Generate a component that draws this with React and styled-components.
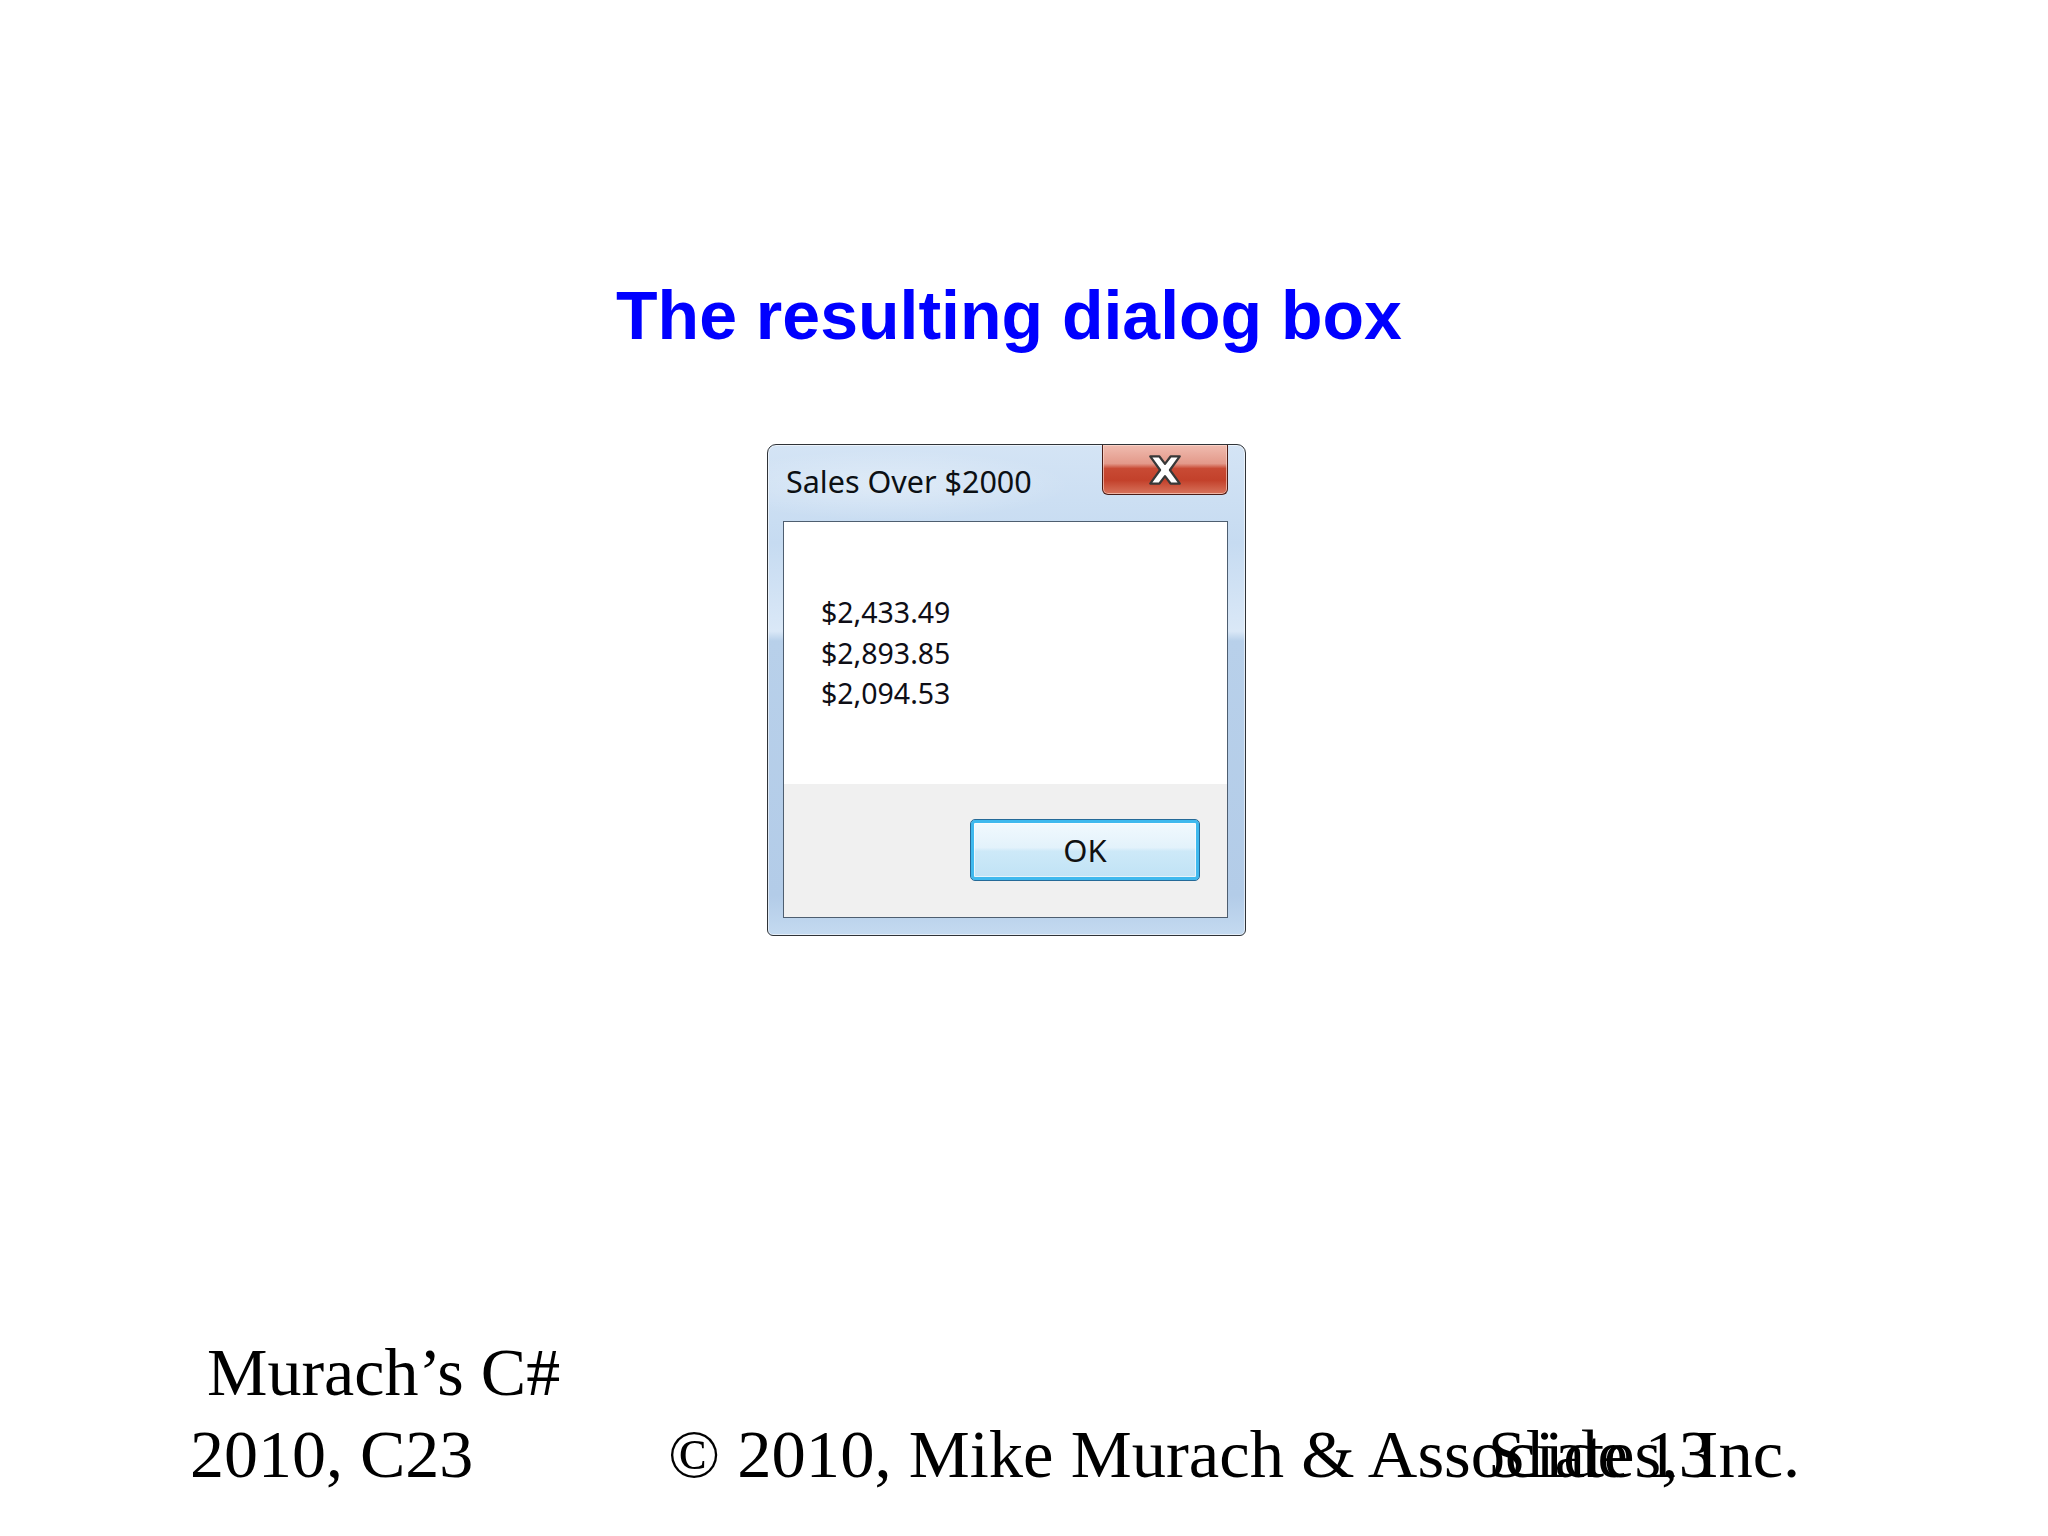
import styled, { createGlobalStyle } from "styled-components"

const GlobalStyle = createGlobalStyle`
    html, body {
        margin: 0;
        padding: 0;
        background: #ffffff;
    }
`

const sales = ["$2,433.49", "$2,893.85", "$2,094.53"]

export default function App(){
    return(
        <>
            <GlobalStyle />
            <Slide>
                <Titulo>The resulting dialog box</Titulo>

                <Janela>
                    <BarraTitulo>
                        <TextoTitulo>Sales Over $2000</TextoTitulo>
                        <BotaoFechar aria-label="Close">
                            <svg width="38" height="32" viewBox="0 0 30 26">
                                <polygon
                                    points="3,2 10.5,2 15,8 19.5,2 27,2 19,13 27,24 19.5,24 15,18 10.5,24 3,24 11,13"
                                    fill="#ffffff"
                                    stroke="#383838"
                                    strokeWidth="1.8"
                                    strokeLinejoin="round"
                                />
                            </svg>
                        </BotaoFechar>
                    </BarraTitulo>

                    <AreaCliente>
                        <Mensagem>
                            {sales.map((valor) => (
                                <Linha key={valor}>{valor}</Linha>
                            ))}
                        </Mensagem>
                        <AreaBotoes>
                            <BotaoOk>OK</BotaoOk>
                        </AreaBotoes>
                    </AreaCliente>
                </Janela>

                <Rodape>
                    <Livro>
                        {"\u00a0Murach’s C#"}
                        <br />
                        2010, C23
                    </Livro>
                    <Copyright>© 2010, Mike Murach &amp; Associates, Inc.</Copyright>
                    <NumeroSlide>Slide 13</NumeroSlide>
                </Rodape>
            </Slide>
        </>
    )
}

const Slide = styled.div`
    width: 2048px;
    height: 1536px;
    display: flex;
    flex-direction: column;
    align-items: center;
    box-sizing: border-box;
    padding-right: 30px;
    overflow: hidden;
`
const Titulo = styled.h1`
    margin: 281px 0 0 0;
    font-family: "Liberation Sans", Arial, sans-serif;
    font-weight: 700;
    font-size: 68px;
    line-height: 68px;
    color: #0000ff;
`
const Janela = styled.div`
    margin: 95px 5px 0 0;
    width: 479px;
    height: 492px;
    box-sizing: border-box;
    display: flex;
    flex-direction: column;
    border: 1px solid #2f3338;
    border-radius: 9px 9px 6px 6px;
    background: linear-gradient(180deg, #d4e4f5 0%, #c6dbf1 20%, #dae8f7 38%, #b8d0ea 40%, #b3cce8 92%, #c4daf0 100%);
    box-shadow: inset 0 0 0 1px rgba(255, 255, 255, 0.55);
`
const BarraTitulo = styled.div`
    height: 76px;
    display: flex;
    align-items: flex-start;
    justify-content: space-between;
    padding: 0 17px 0 18px;
    background: radial-gradient(ellipse 260px 50px at 120px 40px, rgba(255, 255, 255, 0.35), rgba(255, 255, 255, 0) 70%);
`
const TextoTitulo = styled.span`
    margin-top: 15px;
    font-family: "Noto Sans", "Open Sans", sans-serif;
    font-size: 30.5px;
    line-height: 42px;
    color: #0c1014;
    white-space: nowrap;
`
const BotaoFechar = styled.div`
    width: 126px;
    height: 50px;
    box-sizing: border-box;
    display: flex;
    align-items: center;
    justify-content: center;
    border: 1px solid #4b1c16;
    border-top: none;
    border-radius: 0 0 6px 6px;
    background: linear-gradient(180deg, #f0bcb0 0%, #e3998a 38%, #c84a34 48%, #c3412b 72%, #d8745d 100%);
    box-shadow: inset 0 0 0 1px rgba(255, 225, 215, 0.6);
`
const AreaCliente = styled.div`
    flex: 1;
    margin: 0 17px 17px 15px;
    display: flex;
    flex-direction: column;
    border: 1px solid #4e5e70;
`
const Mensagem = styled.div`
    height: 262px;
    box-sizing: border-box;
    padding: 70px 0 0 37px;
    background: #ffffff;
    display: flex;
    flex-direction: column;
`
const Linha = styled.p`
    margin: 0;
    font-family: "Noto Sans", "Open Sans", sans-serif;
    font-size: 28.5px;
    line-height: 40.5px;
    color: #0e0e16;
`
const AreaBotoes = styled.div`
    flex: 1;
    display: flex;
    justify-content: flex-end;
    align-items: flex-start;
    padding: 35px 27px 0 0;
    background: #f0f0f0;
`
const BotaoOk = styled.div`
    width: 230px;
    height: 62px;
    box-sizing: border-box;
    display: flex;
    align-items: center;
    justify-content: center;
    border: 1px solid #256a98;
    border-radius: 5px;
    background: linear-gradient(180deg, #f3fafe 0%, #e3f2fb 46%, #cde9f8 52%, #bfe2f5 100%);
    box-shadow: inset 0 0 0 3px #3fb9ee, inset 0 0 0 4px rgba(255, 255, 255, 0.6);
    font-family: "Noto Sans", "Open Sans", sans-serif;
    font-size: 31px;
    color: #111111;
`
const Rodape = styled.div`
    margin-top: auto;
    align-self: stretch;
    display: grid;
    grid-template-columns: 478px 820px 1fr;
    padding: 0 0 41px 190px;
    font-family: "Liberation Serif", "Times New Roman", serif;
    font-size: 68px;
    line-height: 82px;
    color: #000000;
`
const Livro = styled.div`
    grid-column: 1;
    grid-row: 1;
    white-space: nowrap;
`
const Copyright = styled.div`
    grid-column: 2 / 4;
    grid-row: 1;
    align-self: end;
    white-space: nowrap;
    font-size: 68.6px;
`
const NumeroSlide = styled.div`
    grid-column: 3;
    grid-row: 1;
    align-self: end;
    white-space: nowrap;
`
